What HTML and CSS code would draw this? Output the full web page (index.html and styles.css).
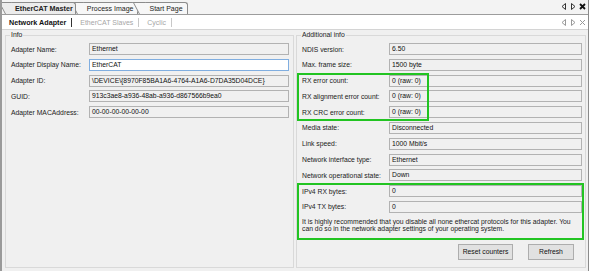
FILE: index.html
```html
<!DOCTYPE html>
<html lang="en">
<head>
    <meta charset="UTF-8">
    <meta name="viewport" content="width=device-width, initial-scale=1.0">
    <title>EtherCAT Master</title>
    <link rel="stylesheet" href="styles.css">
</head>
<body>
    <div class="window">
        <div class="doc-bar">
            <div class="doc-tabs">
                <span class="doc-tab active">EtherCAT Master</span>
                <span class="doc-tab">Process Image</span>
                <span class="doc-tab">Start Page</span>
            </div>
            <div class="bar-btns">
                <svg width="6" height="7" viewBox="0 0 6 7"><path d="M4.5 0.5 L1 3.5 L4.5 6.5 Z" fill="none" stroke="#333"/></svg>
                <svg width="6" height="7" viewBox="0 0 6 7"><path d="M1.5 0.5 L5 3.5 L1.5 6.5 Z" fill="none" stroke="#333"/></svg>
                <svg width="7" height="7" viewBox="0 0 7 7"><path d="M1 1 L6 6 M6 1 L1 6" stroke="#111" stroke-width="1.8"/></svg>
            </div>
        </div>
        <div class="sub-bar">
            <div class="sub-tabs">
                <span class="sub-tab active">Network Adapter</span>
                <span class="sub-tab">EtherCAT Slaves</span>
                <span class="sub-tab">Cyclic</span>
            </div>
            <div class="bar-btns light">
                <svg width="6" height="7" viewBox="0 0 6 7"><path d="M4.5 0.5 L1 3.5 L4.5 6.5 Z" fill="none" stroke="#999"/></svg>
                <svg width="6" height="7" viewBox="0 0 6 7"><path d="M1.5 0.5 L5 3.5 L1.5 6.5 Z" fill="none" stroke="#999"/></svg>
                <svg width="7" height="7" viewBox="0 0 7 7"><path d="M1 1 L6 6 M6 1 L1 6" stroke="#999" stroke-width="1"/></svg>
            </div>
        </div>
        <div class="content">
            <fieldset class="group info">
                <legend>Info</legend>
                <div class="rows">
                    <label>Adapter Name:</label><div class="field">Ethernet</div>
                    <label>Adapter Display Name:</label><div class="field focus">EtherCAT</div>
                    <label>Adapter ID:</label><div class="field">\DEVICE\{8970F85BA1A6-4764-A1A6-D7DA35D04DCE}</div>
                    <label>GUID:</label><div class="field">913c3ae8-a936-48ab-a936-d867566b9ea0</div>
                    <label>Adapter MACAddress:</label><div class="field">00-00-00-00-00-00</div>
                </div>
            </fieldset>
            <fieldset class="group extra">
                <legend>Additional info</legend>
                <div class="rows">
                    <label>NDIS version:</label><div class="field">6.50</div>
                    <label>Max. frame size:</label><div class="field">1500 byte</div>
                    <label>RX error count:</label><div class="field">0 (raw: 0)</div>
                    <label>RX alignment error count:</label><div class="field">0 (raw: 0)</div>
                    <label>RX CRC error count:</label><div class="field">0 (raw: 0)</div>
                    <label>Media state:</label><div class="field">Disconnected</div>
                    <label>Link speed:</label><div class="field">1000 Mbit/s</div>
                    <label>Network interface type:</label><div class="field">Ethernet</div>
                    <label>Network operational state:</label><div class="field">Down</div>
                    <label>IPv4 RX bytes:</label><div class="field">0</div>
                    <label>IPv4 TX bytes:</label><div class="field">0</div>
                </div>
                <p class="hint">It is highly recommended that you disable all none ethercat protocols for this adapter. You can do so in the network adapter settings of your operating system.</p>
                <div class="buttons">
                    <button class="btn reset">Reset counters</button>
                    <button class="btn refresh">Refresh</button>
                </div>
            </fieldset>
            <div class="mark mark-rx"></div>
            <div class="mark mark-ipv4"></div>
        </div>
    </div>
</body>
</html>
```

FILE: styles.css
```css
* { box-sizing: border-box; }
body { margin: 0; font-family: "Liberation Sans", Arial, sans-serif; font-size: 6.8px; color: #1a1a1a; background: #f0f0f0; }
.window { width: 589px; height: 271px; border-left: 2px solid #9a9a9a; border-right: 1px solid #8a8a8a; background: #f0f0f0; overflow: hidden; }

.doc-bar { height: 15px; display: flex; justify-content: space-between; align-items: flex-end; background: #f3f3f3; border-bottom: 1px solid #9c9c9c; }
.doc-tabs { display: flex; padding-left: 10px; height: 12px; }
.doc-tab { position: relative; z-index: 1; height: 12px; padding: 0 4px 0 3px; margin-right: 8px; border-top: 1px solid #8c8c8c; border-right: 1px solid #8c8c8c; border-radius: 0 3px 0 0; background: #f7f7f7; line-height: 11px; font-size: 7px; color: #222; }
.doc-tab::before { content: ""; position: absolute; z-index: -1; left: -7px; top: -1px; bottom: 0; width: 12px; border-left: 1px solid #8c8c8c; border-top: 1px solid #8c8c8c; background: inherit; transform: skewX(28deg); transform-origin: bottom left; }
.doc-tab.active { z-index: 2; background: #ececec; font-weight: bold; font-size: 7.2px; padding-right: 2px; }
.bar-btns { display: flex; gap: 3px; align-items: center; padding: 0 2px 4px 0; }
.bar-btns svg { display: block; }

.sub-bar { height: 15px; display: flex; justify-content: space-between; align-items: center; background: #fff; border-bottom: 1px solid #d4d4d4; }
.sub-tabs { display: flex; align-items: center; padding-left: 5px; }
.sub-tab { padding: 0 5px 0 2px; margin-right: 6px; border-right: 1px solid #c8c8c8; line-height: 9px; color: #a6a6a6; font-size: 7px; }
.sub-tab.active { color: #111; font-weight: bold; border-right: 1px solid #333; font-size: 7.2px; }
.bar-btns.light { padding: 0 2px 0 0; }

.content { position: relative; display: flex; gap: 2px; padding: 1px 2px 0 3px; height: 240px; }
.group { margin: 0; padding: 4px 4px 0 5px; border: 1px solid #d9d9d9; height: 237px; min-width: 0; }
.group legend { padding: 0 1px; margin-left: -1px; font-size: 6.8px; line-height: 8px; color: #222; }
.info { width: 289px; }
.extra { width: 290px; }

.rows { display: grid; grid-auto-rows: 12px; row-gap: 3.8px; align-items: center; }
.info .rows { grid-template-columns: 78px 200px; }
.extra .rows { grid-template-columns: 87px 193px; }
.rows label { white-space: nowrap; color: #222; }
.field { height: 12px; padding-left: 2px; border: 1px solid #b2b2b2; background: #f0f0f0; line-height: 10px; white-space: nowrap; overflow: hidden; color: #111; }
.field.focus { background: #fff; border-color: #80aee0; }

.hint { margin: 5px 8px 0 0; line-height: 7.4px; font-size: 6.8px; color: #222; }
.buttons { display: flex; justify-content: flex-end; gap: 15px; margin-top: 11px; padding-right: 7px; }
.btn { height: 16px; padding: 0; border: 1px solid #adadad; background: #e1e1e1; font-family: inherit; font-size: 6.8px; color: #111; }
.reset { width: 55px; }
.refresh { width: 46px; }

.mark { position: absolute; border: 2px solid #22c422; }
.mark-rx { left: 295px; top: 43px; width: 132px; height: 48px; }
.mark-ipv4 { left: 295px; top: 153px; width: 287px; height: 57px; }
```
